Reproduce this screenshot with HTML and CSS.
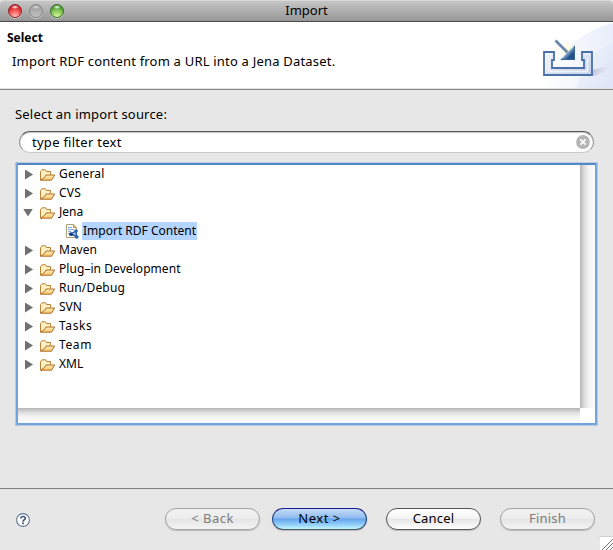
FILE: index.html
```html
<!DOCTYPE html>
<html lang="en">
<head>
<meta charset="utf-8">
<title>Import</title>
<link rel="stylesheet" href="styles.css">
</head>
<body>
<svg width="0" height="0" class="defs" aria-hidden="true">
  <defs>
    <linearGradient id="gold" x1="0" y1="0" x2="0" y2="1"><stop offset="0" stop-color="#fff0bd"/><stop offset="1" stop-color="#f8c467"/></linearGradient>
    <symbol id="folder" viewBox="0 0 16 14">
      <path d="M.5 12V3.5L2 1.8H5.5L6.5 3.5H10.5V6.5" fill="#fff0c4" stroke="#bd8236"/>
      <path d="M.5 12.2L4.5 9.5L6 7H14.7L11.5 12.2Z" fill="url(#gold)" stroke="#ad6c26"/>
    </symbol>
  </defs>
</svg>
<div class="window">
  <header class="titlebar">
    <div class="lights"><i class="light red"></i><i class="light gray"></i><i class="light green"></i></div>
    <span class="caption">Import</span>
  </header>
  <section class="banner">
    <div class="intro"><h1>Select</h1><p>Import RDF content from a URL into a Jena Dataset.</p></div>
    <svg class="art" width="75" height="66" viewBox="538 22 75 66">
      <defs>
        <linearGradient id="sky" x1="0" y1="0" x2="1" y2="0"><stop offset="0" stop-color="#fff"/><stop offset="1" stop-color="#e9eefa"/></linearGradient>
        <linearGradient id="sky2" x1="0" y1="0" x2="1" y2="1"><stop offset="0" stop-color="#eef2fb"/><stop offset="1" stop-color="#d7e0f5"/></linearGradient>
        <linearGradient id="tray" x1="0" y1="0" x2="1" y2="1"><stop offset="0" stop-color="#f1f5fb"/><stop offset="1" stop-color="#c3d0e8"/></linearGradient>
        <linearGradient id="tip" x1="0" y1="0" x2="1" y2="1"><stop offset=".42" stop-color="#b5d3ee"/><stop offset=".7" stop-color="#23538f"/></linearGradient>
        <linearGradient id="shade" x1="0" y1="0" x2="1" y2="0"><stop offset="0" stop-color="#aaa5bd" stop-opacity=".6"/><stop offset="1" stop-color="#d0cddd" stop-opacity="0"/></linearGradient>
        <radialGradient id="glow"><stop offset="0" stop-color="#fffbc8"/><stop offset="1" stop-color="#fffbe0" stop-opacity="0"/></radialGradient>
      </defs>
      <path d="M538 88Q566 34 613 23V88Z" fill="url(#sky)"/>
      <path d="M577 88Q588 48 613 44V88Z" fill="url(#sky2)" opacity=".65"/>
      <path d="M592 70L611 65Q604 74 592 76Z" fill="url(#shade)"/>
      <circle cx="568" cy="51" r="10" fill="url(#glow)"/>
      <path d="M544 52H554V60H552V68H584V60H582V52H592V75H544Z" fill="url(#tray)" stroke="#4a70aa" stroke-width="1.8"/>
      <path d="M546 73.5V54H552.5M583.5 54H590" fill="none" stroke="#fff" stroke-opacity=".8"/>
      <path d="M549 58V71.5H587.5V58" fill="none" stroke="#f2f4fb" stroke-width="1.5"/>
      <path d="M555.5 40.5L567.5 52.5" stroke="#6d89b3" stroke-width="2.8"/>
      <path d="M575 45V60H560Z" fill="url(#tip)"/>
      <path d="M574.5 46V59.5H561" fill="none" stroke="#386291"/>
    </svg>
  </section>
  <main class="content">
    <div class="label">Select an import source:</div>
    <div class="search"><span>type filter text</span>
      <svg width="14" height="14" viewBox="0 0 14 14"><circle cx="7" cy="7" r="6.9" fill="#b5b5b5"/><path d="M4.4 4.4L9.6 9.6M9.6 4.4L4.4 9.6" stroke="#fff" stroke-width="1.7"/></svg>
    </div>
    <div class="tree">
      <ul class="rows">
        <li><i class="closed"></i><svg class="folder"><use href="#folder"/></svg><span class="wide">General</span></li>
        <li><i class="closed"></i><svg class="folder"><use href="#folder"/></svg><span class="wide">CVS</span></li>
        <li><i class="open"></i><svg class="folder"><use href="#folder"/></svg><span>Jena</span></li>
        <li class="child">
          <svg class="file" width="14" height="15" viewBox="0 0 14 15"><path d="M1.5.5H8.5L11.5 3.5V13.5H1.5Z" fill="#fbfcff" stroke="#a9a178"/><path d="M8.5.5V3.5H11.5" fill="#e5c878" stroke="#b49958"/><path d="M3 3.5H7M3 5.5H9M3 7.5H6M3 9.5H5" stroke="#84a6d7"/><path d="M11 7L6 10L11.5 12.5Z" fill="#b9d2f4" stroke="#2859a5" stroke-width="1.4"/><circle cx="11" cy="7" r="1.8" fill="#2c65b7"/><circle cx="6" cy="10.2" r="1.9" fill="#173f83"/><circle cx="11.7" cy="12.8" r="1.9" fill="#2864b9"/></svg>
          <span class="selected">Import RDF Content</span></li>
        <li><i class="closed"></i><svg class="folder"><use href="#folder"/></svg><span>Maven</span></li>
        <li><i class="closed"></i><svg class="folder"><use href="#folder"/></svg><span class="plugin">Plug–in Development</span></li>
        <li><i class="closed"></i><svg class="folder"><use href="#folder"/></svg><span class="wide">Run/Debug</span></li>
        <li><i class="closed"></i><svg class="folder"><use href="#folder"/></svg><span>SVN</span></li>
        <li><i class="closed"></i><svg class="folder"><use href="#folder"/></svg><span class="tasks">Tasks</span></li>
        <li><i class="closed"></i><svg class="folder"><use href="#folder"/></svg><span class="tasks">Team</span></li>
        <li><i class="closed"></i><svg class="folder"><use href="#folder"/></svg><span>XML</span></li>
      </ul>
      <div class="vbar"></div>
      <div class="hbar"></div>
    </div>
  </main>
  <footer class="footer">
    <svg class="help" width="14" height="14" viewBox="0 0 14 14"><circle cx="7" cy="7" r="6.4" fill="#fff" stroke="#637592" stroke-width="1.1"/><path d="M4.8 5.5Q4.8 3.5 7 3.5Q9.3 3.5 9.3 5.3Q9.3 6.4 8 7Q7 7.5 7 8.7" fill="none" stroke="#3f557c" stroke-width="1.6"/><path d="M6.1 9.6H7.9V11.2H6.1Z" fill="#3f557c"/></svg>
    <button class="off back">&lt; Back</button>
    <button class="primary">Next &gt;</button>
    <button class="cancel">Cancel</button>
    <button class="off">Finish</button>
    <svg class="grip" width="14" height="14" viewBox="0 0 14 14"><path d="M0 0H14V14H0Z" fill="#fff"/><path d="M0 14V.5H14" fill="none" stroke="#cfcfcf"/><path d="M3 14L14 3M7 14L14 7M11 14L14 11" stroke="#777"/></svg>
  </footer>
</div>
</body>
</html>
```
FILE: styles.css
```css
* { box-sizing: border-box; }
body { margin: 0; font: 13px "Lucida Grande", "Noto Sans", "Open Sans", sans-serif; color: #000; background: #e7e7e7; }
.defs { position: absolute; }
.window { width: 613px; height: 550px; display: flex; flex-direction: column; overflow: hidden; }
.titlebar { flex: none; height: 22px; display: grid; grid-template-columns: 1fr auto 1fr; align-items: center; border-top: 1px solid #d9d9d9; border-bottom: 1px solid #484848; background: linear-gradient(#c6c6c6, #969696); border-radius: 4px 4px 0 0; }
.caption { line-height: 18px; padding-bottom: 2px; }
.lights { display: flex; gap: 7px; padding-left: 8px; }
.light { width: 14px; height: 14px; border-radius: 50%; border: 1px solid #777; box-shadow: 0 1px 0 #c6c6c6; }
.red { border-color: #8d2329; background: radial-gradient(ellipse 4px 2px at 50% 17%, #fff, transparent), radial-gradient(circle at 50% 95%, #ffc1ba, #f45b57 45%, #c9181e 80%); }
.gray { border-color: #858585; background: radial-gradient(ellipse 4px 2px at 50% 17%, #ddd, transparent), linear-gradient(#999, #c3c3c3); }
.green { border-color: #3c702a; background: radial-gradient(ellipse 4px 2px at 50% 17%, #fff, transparent), radial-gradient(circle at 50% 95%, #d6f79d, #8ccb5c 45%, #3d8e28 80%); }
.banner { flex: none; height: 68px; display: flex; justify-content: space-between; background: #fff; border-bottom: 1px solid #868686; box-shadow: inset 0 -1px #e0e0e0; }
.intro { padding: 6px 0 0 7px; }
h1 { margin: 0; font-size: 12px; line-height: 20px; }
p { margin: 3px 0 0 5px; line-height: 20px; white-space: nowrap; letter-spacing: .2px; }
.content { flex: 1; padding: 14px 15px 0; }
.label { line-height: 20px; letter-spacing: .2px; }
.search { margin: 7px 4px 0; height: 22px; border: 1px solid #999; border-top-color: #555; border-bottom-color: #ccc; border-radius: 11px; background: #fff; box-shadow: inset 0 1px 1px #c5c5c5; display: flex; justify-content: space-between; align-items: center; padding: 0 3px 0 12px; letter-spacing: .27px; }
.tree { margin: 9px 0 0; width: 583px; height: 264px; border: 3px solid #6a9bd6; border-color: #5288c8 #71a3dd #71a3dd; border-radius: 3px; background: #fff; display: grid; grid-template: 243px 15px / 562px 15px; outline: 1px solid #b9cce4; outline-offset: -1px; }
.rows { list-style: none; margin: 0; padding: 0 0 0 7px; font-size: 12px; }
li { height: 19px; display: flex; align-items: center; line-height: 18px; white-space: nowrap; }
li span { margin-top: -2px; }
.wide { letter-spacing: .18px; }
.plugin { letter-spacing: .06px; }
.tasks { letter-spacing: .6px; }
.closed { width: 8px; height: 10px; background: #707070; clip-path: polygon(0 0, 100% 50%, 0 100%); margin-right: 7px; }
.open { width: 10px; height: 8px; background: #707070; clip-path: polygon(0 0, 100% 0, 50% 100%); margin: 0 7px 0 -2px; }
.folder { width: 16px; height: 14px; margin-right: 3px; }
.child { padding-left: 40px; }
.file { margin-right: 3px; }
.selected { background: #b4d5ff; padding: 0 1px; height: 18px; }
.vbar { background: linear-gradient(90deg, #b5b5b5, #dedede 30%, #f5f5f5 60%, #fafafa); }
.hbar { background: linear-gradient(#b5b5b5, #dedede 30%, #f5f5f5 60%, #fafafa); }
.footer { position: relative; flex: none; height: 62px; border-top: 1px solid #808080; display: flex; align-items: flex-start; padding: 19px 18px 0 16px; }
.help { margin: 5px auto 0 0; }
button { width: 95px; height: 22px; margin: 0 0 0 12px; padding: 0 0 1px; font: inherit; line-height: 19px; border: 1px solid #555; border-radius: 11px; background: linear-gradient(#fff, #f5f5f5 45%, #e7e7e7 52%, #fff); box-shadow: 0 1px 1px #bbb; letter-spacing: .2px; }
.cancel, .cancel + button { margin-left: 19px; }
.off { color: #7c7c7c; border-color: #a2a2a2; background: linear-gradient(#f1f1f1, #ededed 45%, #e5e5e5 52%, #f4f4f4); }
.back, .primary { letter-spacing: .5px; }
.primary { border-color: #1a1a90 #254584 #4a5560; background: linear-gradient(#c5dcf6, #8fbcf0 45%, #65a5ea 50%, #8dcaf9 75%, #c0f6ff); }
.grip { position: absolute; right: 0; bottom: 0; }
```
